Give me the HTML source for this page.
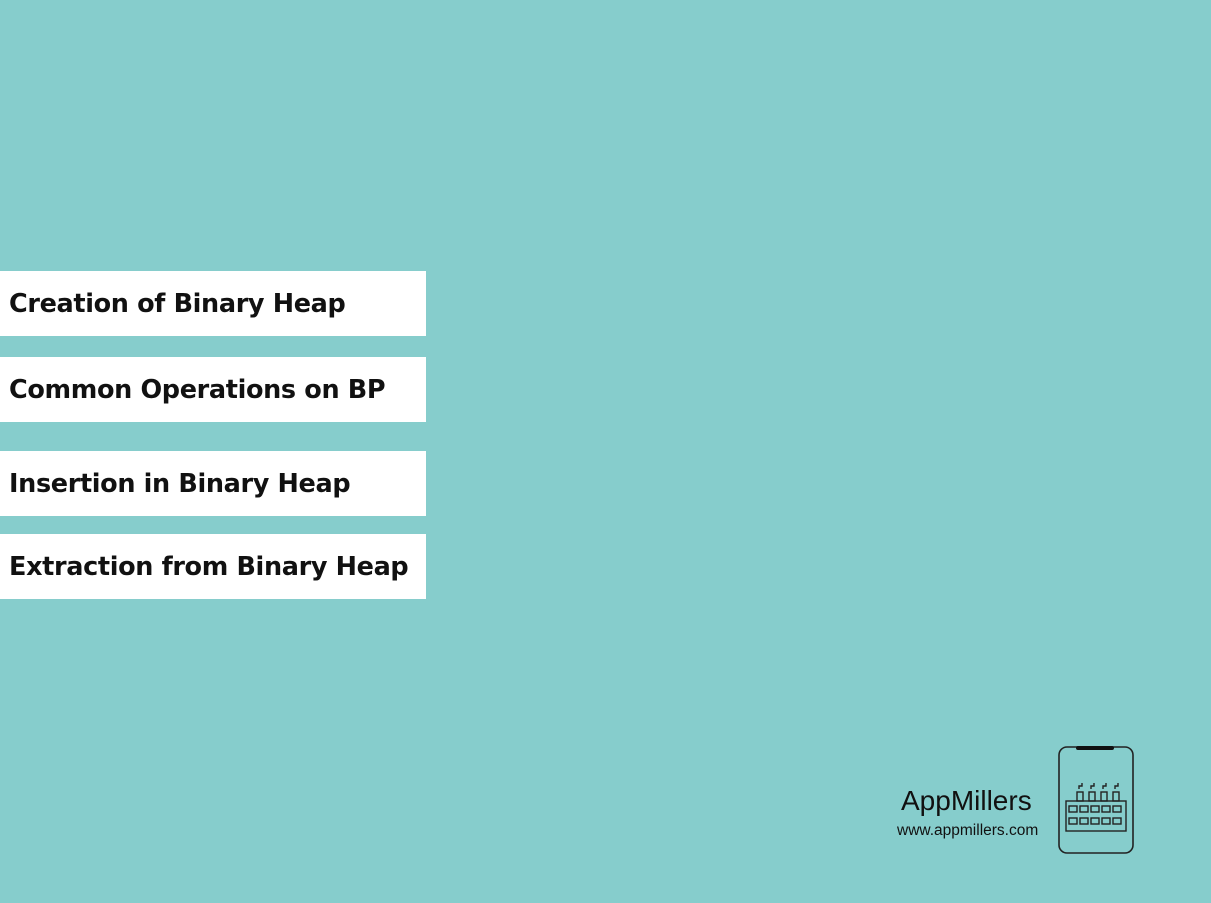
<!DOCTYPE html>
<html><head><style>
body{margin:0;width:1211px;height:903px;background:#86cdcc;position:relative;overflow:hidden;font-family:"Liberation Sans",sans-serif}
.b{position:absolute;left:0;width:426px;height:65px;background:#fff;box-sizing:border-box;padding-left:9px;line-height:67px;font-family:"DejaVu Sans",sans-serif;font-weight:bold;font-size:25.5px;letter-spacing:-0.35px;color:#111;white-space:nowrap}
.l1{position:absolute;left:901px;top:785px;font-size:28px;color:#111}
.l2{position:absolute;left:897px;top:822px;font-size:15.5px;color:#111}
</style></head><body>
<div class="b" style="top:271px">Creation of Binary Heap</div>
<div class="b" style="top:357px">Common Operations on BP</div>
<div class="b" style="top:451px">Insertion in Binary Heap</div>
<div class="b" style="top:534px">Extraction from Binary Heap</div>
<div class="l1">AppMillers</div>
<div class="l2">www.appmillers.com</div>
<svg style="position:absolute;left:1056px;top:744px" width="80" height="112" viewBox="0 0 80 112">
<rect x="3" y="3" width="74" height="106" rx="8" fill="none" stroke="#222" stroke-width="1.6"/>
<rect x="20" y="2" width="38" height="4" rx="2" fill="#111"/>
<g fill="none" stroke="#222" stroke-width="1.4">
<rect x="10" y="57" width="60" height="30"/>
<rect x="21" y="48" width="6" height="9"/><rect x="33" y="48" width="6" height="9"/><rect x="45" y="48" width="6" height="9"/><rect x="57" y="48" width="6" height="9"/>
<path d="M23 45v-3h3v-3M35 45v-3h3v-3M47 45v-3h3v-3M59 45v-3h3v-3"/>
<rect x="13" y="62" width="8" height="6"/><rect x="24" y="62" width="8" height="6"/><rect x="35" y="62" width="8" height="6"/><rect x="46" y="62" width="8" height="6"/><rect x="57" y="62" width="8" height="6"/>
<rect x="13" y="74" width="8" height="6"/><rect x="24" y="74" width="8" height="6"/><rect x="35" y="74" width="8" height="6"/><rect x="46" y="74" width="8" height="6"/><rect x="57" y="74" width="8" height="6"/>
</g></svg>
</body></html>
